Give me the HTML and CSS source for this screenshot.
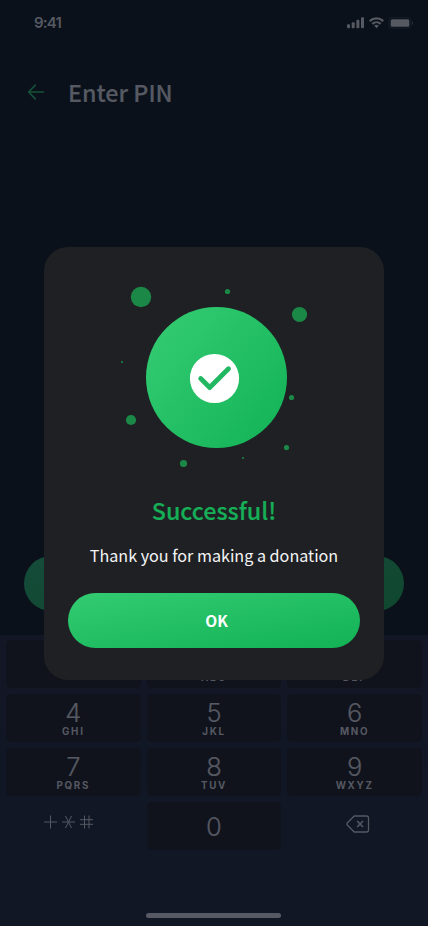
FILE: index.html
```html
<!DOCTYPE html>
<html lang="en">
<head>
<meta charset="utf-8">
<title>Enter PIN</title>
<meta name="viewport" content="width=device-width, initial-scale=1">
<link rel="stylesheet" href="styles.css">
</head>
<body>
<div class="screen">
  <header class="status">
    <span class="time">9:41</span>
    <svg class="indicators" width="68" height="14" viewBox="0 0 68 14" fill="currentColor">
      <rect x="0" y="8.2" width="3" height="4" rx="1"/><rect x="4.7" y="6.2" width="3" height="6" rx="1"/><rect x="9.4" y="3.7" width="3" height="8.5" rx="1"/><rect x="14" y="1.2" width="3" height="11" rx="1"/>
      <g fill="none" stroke="currentColor" stroke-width="2.200"><path d="M22.7 5.1a10 10 0 0 1 13.6 0"/><path d="M25.3 7.9a6.2 6.2 0 0 1 8.4 0"/></g>
      <path d="M27.2 9.8a3.6 3.6 0 0 1 4.6 0l-2.3 2.4z"/>
      <rect x="41.900" y="1.600" width="22" height="10.600" rx="3" fill="none" stroke="currentColor" opacity=".2"/>
      <rect x="43.700" y="3.2" width="18.6" height="7.5" rx="1.5"/><path d="M65 5v4c1.4-.5 1.4-3.500 0-4z" opacity=".4"/>
    </svg>
  </header>
  <div class="titlebar">
    <svg class="back" width="18" height="18" viewBox="0 0 18 18" fill="none" stroke="currentColor" stroke-width="1.700" stroke-linecap="round" stroke-linejoin="round"><path d="M16.500 9H1.800M8.300 2.200 1.600 9 8.300 15.800"/></svg>
    <h1>Enter PIN</h1>
  </div>
  <div class="continue"></div>
  <div class="keypad">
    <div class="keys">
      <div class="key"><b>1</b></div>
      <div class="key"><b>2</b><i>ABC</i></div>
      <div class="key"><b>3</b><i>DEF</i></div>
      <div class="key"><b>4</b><i>GHI</i></div>
      <div class="key"><b>5</b><i>JKL</i></div>
      <div class="key"><b>6</b><i>MNO</i></div>
      <div class="key"><b>7</b><i>PQRS</i></div>
      <div class="key"><b>8</b><i>TUV</i></div>
      <div class="key"><b>9</b><i>WXYZ</i></div>
      <div class="key plain symbols">
        <svg width="50" height="16" viewBox="0 0 50 16" fill="none" stroke="currentColor"><path d="M0 8h13M6.500 1.500v13M18 8h13M21.500 2l6 12M27.500 2l-6 12M36 5.700h13M36 10.300h13M40.500 1.500v13M45 1.500v13"/></svg>
      </div>
      <div class="key zero"><b>0</b></div>
      <div class="key plain erase">
        <svg width="24" height="18" viewBox="0 0 24 18" fill="none" stroke="currentColor" stroke-width="1.300" stroke-linejoin="round"><path d="M8.200 1H20.500a2 2 0 0 1 2 2v12a2 2 0 0 1-2 2H8.200L1 9.800v-1.600z"/><path d="m11.200 6 5.800 6m0-6-5.800 6" stroke-width="1.600"/></svg>
      </div>
    </div>
    <div class="home"></div>
  </div>
  <section class="modal">
    <svg class="badge" width="210" height="190" viewBox="0 0 210 190">
      <defs><linearGradient id="g" x1="1" y1="1" x2="0" y2=".15"><stop offset="0" stop-color="#12b255"/><stop offset="1" stop-color="#33cb72"/></linearGradient></defs>
      <g fill="#1b8847"><circle cx="31" cy="17" r="10.200"/><circle cx="117.500" cy="11.500" r="2.600"/><circle cx="189.500" cy="34.500" r="7.600"/><circle cx="12" cy="82" r="1"/><circle cx="181.500" cy="117.500" r="2.600"/><circle cx="21" cy="140" r="5.100"/><circle cx="176.500" cy="167.500" r="2.600"/><circle cx="133" cy="178" r="1"/><circle cx="73.500" cy="183.500" r="3.600"/></g>
      <circle cx="106.500" cy="97.500" r="70.500" fill="url(#g)"/>
      <circle cx="104.500" cy="98.500" r="24.600" fill="#fff"/>
      <path d="m90.700 98.500 9 9L118.500 88.700" fill="none" stroke="#22b862" stroke-width="4.800" stroke-linecap="round" stroke-linejoin="round"/>
    </svg>
    <h2>Successful!</h2>
    <p>Thank you for making a donation</p>
    <button class="ok">OK</button>
  </section>
</div>
</body>
</html>
```
FILE: styles.css
```css
* { box-sizing: border-box; }
body { margin: 0; }
.screen {
  position: relative;
  width: 428px;
  height: 926px;
  overflow: hidden;
  display: flex;
  flex-direction: column;
  background: #0a111a;
  color: #565962;
  font-family: "Noto Sans CJK SC", "Noto Sans", sans-serif;
}
.status {
  height: 44px;
  padding: 0 13px 0 34px;
  display: flex;
  align-items: center;
  justify-content: space-between;
}
.time { font: 600 15px/20px Inter, sans-serif; letter-spacing: -.8px; padding-top: 1px; }
.indicators { margin-top: 2px; }
.titlebar {
  height: 50px;
  margin-top: 23px;
  padding-left: 27px;
  display: flex;
  align-items: center;
  gap: 23px;
}
.back { color: #165139; }
h1 { margin: 0; font-size: 23.3px; line-height: 36px; font-weight: 500; -webkit-text-stroke: .2px currentColor; }
.continue {
  height: 55px;
  margin: auto 24px 24px;
  border-radius: 28px;
  background: linear-gradient(170deg, #154c3a, #10472f);
}
.keypad {
  height: 291px;
  flex: none;
  padding: 5px 6px 8px;
  background: linear-gradient(#131625, #111725 60%);
  display: flex;
  flex-direction: column;
  justify-content: space-between;
  align-items: center;
}
.keys {
  width: 100%;
  display: grid;
  grid-template-columns: repeat(3, 1fr);
  grid-auto-rows: 48px;
  gap: 6px;
}
.key {
  border-radius: 5px;
  background: #10131c;
  display: flex;
  flex-direction: column;
  align-items: center;
  padding-top: 5px;
}
.key b { font: 300 25.5px/27px Inter, sans-serif; -webkit-text-stroke: .2px currentColor; }
.key i { font: 700 9.800px/11px Inter, sans-serif; letter-spacing: 1.7px; }
.plain { background: none; }
.symbols { padding: 12px 8px 0 0; }
.erase { padding: 13px 0 0 6px; }
.zero { padding-top: 11px; }
.home { width: 135px; height: 5px; margin-right: 1px; border-radius: 3px; background: #575a64; }
.modal {
  position: absolute;
  top: 247px;
  left: 44px;
  width: 340px;
  height: 433px;
  padding: 33px 24px 32px;
  border-radius: 24px;
  background: #1f2023;
  display: flex;
  flex-direction: column;
  align-items: center;
}
.badge { margin-left: 2px; flex: none; }
h2 { margin: 22px 0 0; color: #16ae57; font-size: 23.3px; line-height: 36px; font-weight: 500; -webkit-text-stroke: .2px currentColor; }
p { margin: 13px 0 0; color: #f3f4f5; font-size: 16.15px; line-height: 28px; white-space: nowrap; }
.ok {
  width: 100%;
  height: 55px;
  margin-top: auto;
  border: 0;
  border-radius: 28px;
  background: linear-gradient(170deg, #33cb72, #12b255);
  color: #fff;
  font: 700 15.5px/24px "Noto Sans CJK SC", "Noto Sans", sans-serif;
  padding: 0 0 1px 5px;
}
```
